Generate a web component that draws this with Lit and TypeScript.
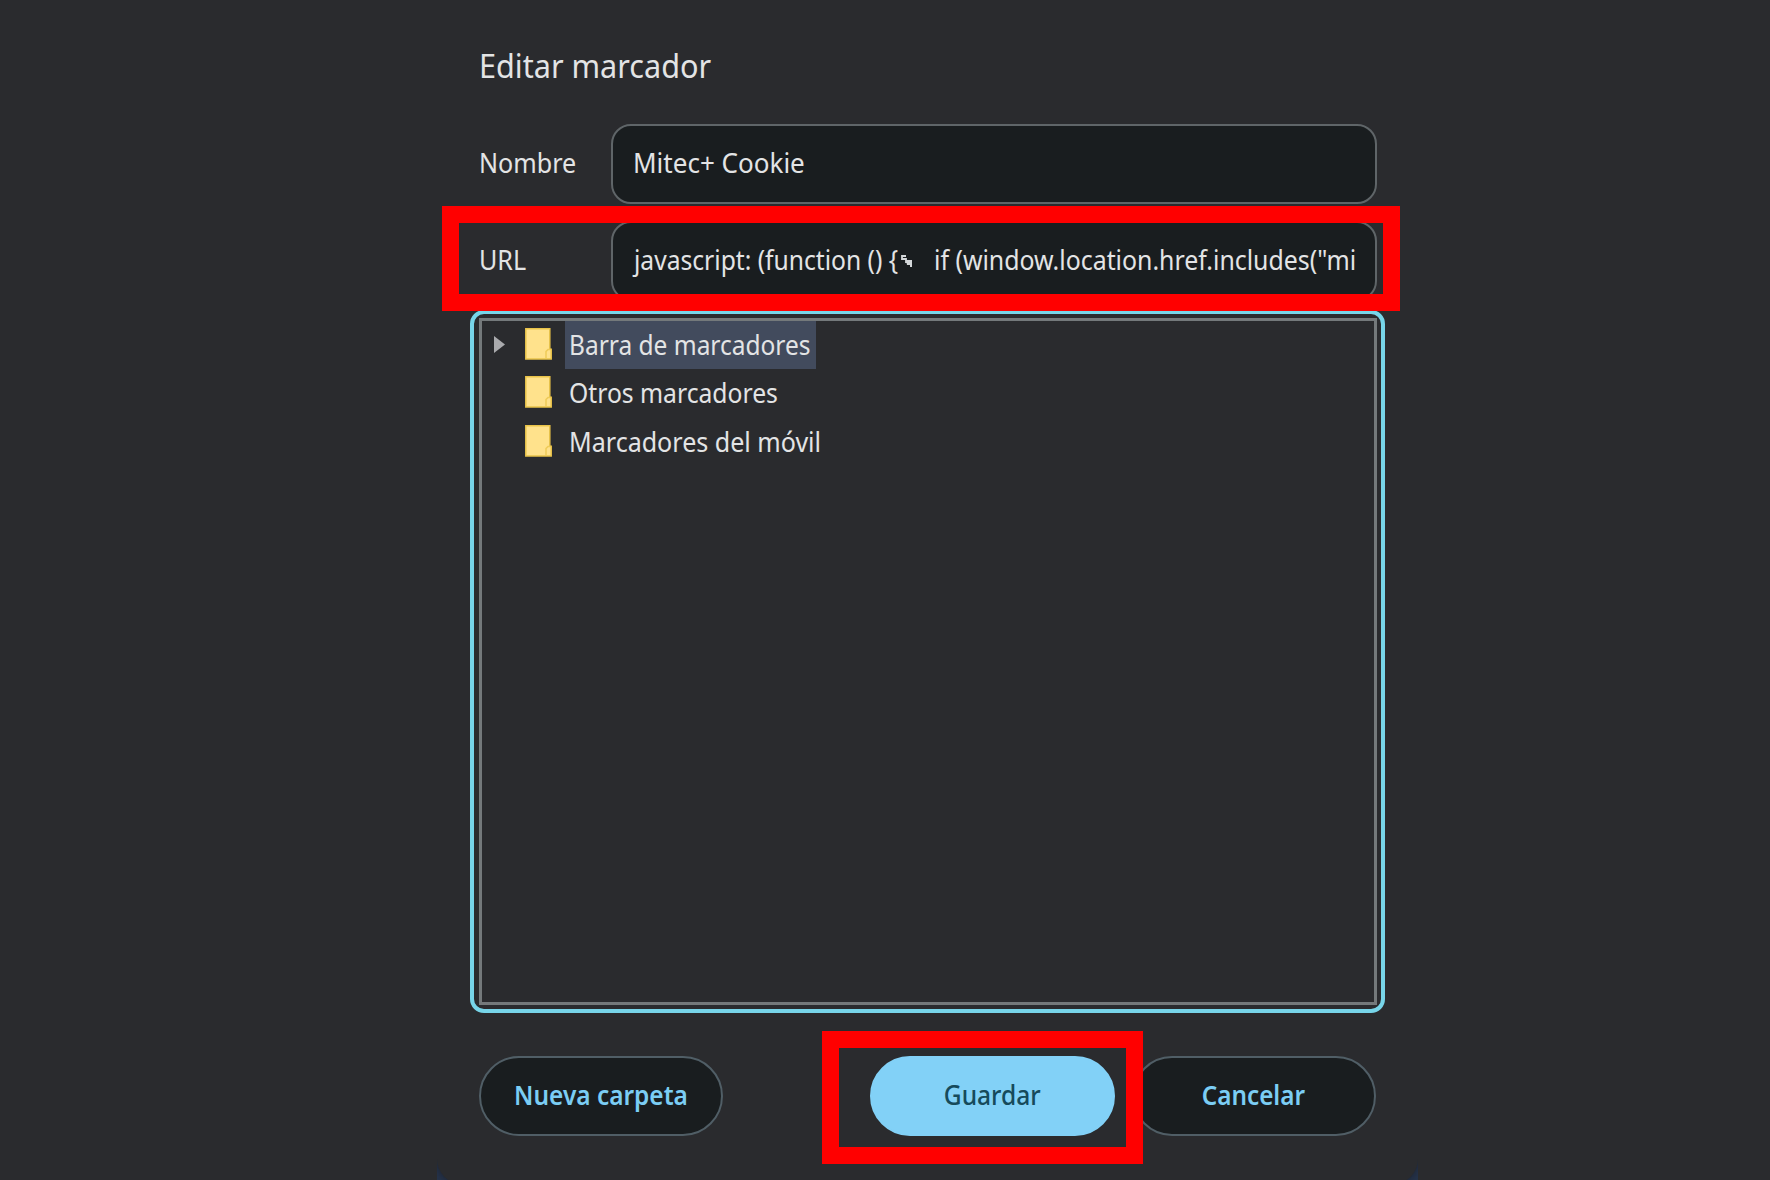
import { LitElement, html, css } from "lit";
import { customElement, property } from "lit/decorators.js";
import { styleMap } from "lit/directives/style-map.js";

/* One line of text, condensed horizontally by a factor. */
@customElement("fit-text")
class FitText extends LitElement {
  @property() text = "";
  @property({ type: Number }) ratio = 1;
  @property({ type: Boolean }) centered = false;

  static styles = css`
    :host { display: block; flex: none; white-space: pre; }
    .line { display: inline-block; transform-origin: 0 50%; }
    .centered { transform-origin: 50% 50%; }
  `;

  render() {
    return html`<span
      class="line ${this.centered ? "centered" : ""}"
      style=${styleMap({ transform: `scaleX(${this.ratio})` })}
      >${this.text}</span>`;
  }
}

const folders = [
  { name: "Barra de marcadores", ratio: 0.907, selected: true },
  { name: "Otros marcadores", ratio: 0.914, selected: false },
  { name: "Marcadores del móvil", ratio: 0.928, selected: false },
];

@customElement("app-root")
class AppRoot extends LitElement {
  static styles = css`
    :host {
      display: block;
      position: relative;
      width: 1770px;
      height: 1180px;
      overflow: hidden;
      background: #2a2b2e;
      color: #e3e4e5;
      font: 400 27px/36px "Noto Sans", "Open Sans", sans-serif;
    }
    * { box-sizing: border-box; }
    .backdrop {
      width: 981px;
      height: 1180px;
      margin-left: 437px;
      overflow: hidden;
      background: #25334b;
    }
    .dialog {
      height: 1184px;
      padding: 43px 41.5px 0 41.5px;
      border-radius: 0 0 25px 25px;
      background: #2a2b2e;
      box-shadow: 0 0 8px #1d222c;
    }
    .title { height: 81px; font-size: 33px; line-height: 45px; }
    .row { display: flex; height: 79.5px; margin-bottom: 17.5px; }
    .label { width: 132.5px; padding-top: 20px; line-height: 37px; }
    .input {
      display: flex;
      flex: 1;
      min-width: 0;
      padding: 18px 0 0 19.5px;
      border: 2px solid #5f6568;
      border-radius: 20px;
      background: #191d1f;
      line-height: 37px;
    }
    .input .code { width: 269px; margin-left: 1px; }
    .mark { width: 14px; height: 14px; margin: 13px 20.5px 0 -3px; flex: none; }
    .tree {
      height: 687px;
      width: 898px;
      margin-top: -0.5px;
      border: 3px solid #74797b;
    }
    .ring {
      position: absolute;
      left: 470px;
      top: 310px;
      width: 915px;
      height: 702.5px;
      border: 4.5px solid #77d5e9;
      border-radius: 14px;
    }
    .item { display: flex; height: 48.4px; }
    .arrow { width: 11px; height: 19px; margin: 14px 20px 0 12px; }
    .folder { width: 27px; height: 32px; margin-top: 7.5px; }
    .name { height: 48.4px; width: 251px; margin-left: 13px; padding: 6.6px 0 0 4px; }
    .selected { background: #424b5d; }
    .buttons { display: flex; margin-top: 51.5px; }
    .button {
      width: 244.5px;
      height: 80px;
      border: 2px solid #505e66;
      border-radius: 40px;
      background: #191d1f;
      color: #7bcdf4;
      font-weight: 600;
      line-height: 37px;
      text-align: center;
      padding-top: 18px;
    }
    .save {
      margin: 0 17px 0 147px;
      background: #82d1f7;
      border-color: #82d1f7;
      color: #164a5b;
      font-weight: 500;
    }
    .callout { position: absolute; border: 17.3px solid #f00; }
    .url-callout { left: 442px; top: 206px; width: 958px; height: 105px; }
    .save-callout { left: 822px; top: 1031px; width: 321px; height: 132.5px; }
  `;

  render() {
    return html`
      <div class="backdrop">
        <div class="dialog">
          <fit-text class="title" text="Editar marcador" ratio="0.927"></fit-text>
          <div class="row">
            <fit-text class="label" text="Nombre" ratio="0.93"></fit-text>
            <div class="input"><fit-text text="Mitec+ Cookie" ratio="0.964"></fit-text></div>
          </div>
          <div class="row">
            <fit-text class="label" text="URL" ratio="0.93"></fit-text>
            <div class="input">
              <fit-text class="code" text="javascript: (function () {" ratio="0.912"></fit-text>
              <svg class="mark" viewBox="0 0 14 14">
                <path d="M6 2H2v3h4v3h5" fill="none" stroke="#d4d8da" stroke-width="1.8" />
                <path d="M6 6h6v7h-2v-2H7z" fill="#d4d8da" />
              </svg>
              <fit-text text='if (window.location.href.includes("mi' ratio="0.921"></fit-text>
            </div>
          </div>
          <div class="tree">
            ${folders.map(
              (f) => html`<div class="item">
                <svg class="arrow" viewBox="0 0 11 19">
                  <path d="M0 1L11 9.5L0 18Z" fill=${f.selected ? "#a9aaad" : "none"} />
                </svg>
                <svg class="folder" viewBox="0 0 27 32">
                  <path d="M.8 .8h24v20.5h1.4v9.7H.8z" fill="#ffe28c" stroke="#e9c349" stroke-width="1.5" />
                  <path d="M21 30.5v-7l2-2h2.5" fill="none" stroke="#efcb58" stroke-width="1.5" />
                </svg>
                <fit-text class="name ${f.selected ? "selected" : ""}" .text=${f.name} .ratio=${f.ratio}></fit-text>
              </div>`
            )}
          </div>
          <div class="buttons">
            <div class="button"><fit-text text="Nueva carpeta" ratio="0.905" centered></fit-text></div>
            <div class="button save"><fit-text text="Guardar" ratio="0.91" centered></fit-text></div>
            <div class="button"><fit-text text="Cancelar" ratio="0.9" centered></fit-text></div>
          </div>
        </div>
      </div>
      <div class="ring"></div>
      <div class="callout url-callout"></div>
      <div class="callout save-callout"></div>
    `;
  }
}
